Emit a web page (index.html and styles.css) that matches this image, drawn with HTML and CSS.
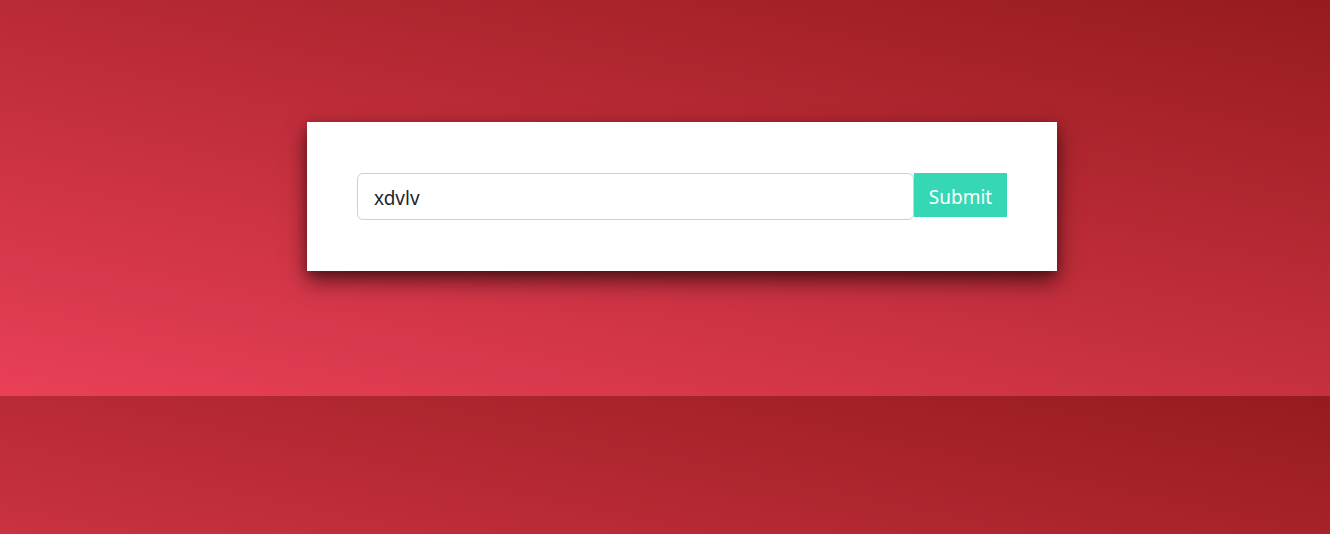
FILE: index.html
```html
<!DOCTYPE html>
<html lang="en">
<head>
<meta charset="utf-8">
<title>Form</title>
<link rel="stylesheet" href="styles.css">
</head>
<body>
  <main class="page">
    <form class="card" onsubmit="return false;">
      <input class="field" type="text" value="xdvlv">
      <button class="submit" type="submit">Submit</button>
    </form>
  </main>
</body>
</html>
```

FILE: styles.css
```css
html {
  background: linear-gradient(12deg, #e94057 0%, #961b1e 100%) 0 0 / 100% 396px repeat;
}
body {
  margin: 0;
  font-family: "Noto Sans", "Open Sans", sans-serif;
}
.page {
  display: flex;
  align-items: flex-start;
  box-sizing: border-box;
  min-height: 396px;
  padding: 122px 0 0 307px;
}
.card {
  width: 750px;
  box-sizing: border-box;
  padding: 51px 50px 51px 50px;
  background: #fff;
  box-shadow: 0 10px 20px rgba(20, 0, 0, 0.6), 0 3px 8px rgba(20, 0, 0, 0.25);
  display: flex;
  align-items: flex-start;
  margin: 0;
}
.field {
  flex: 0 0 557px;
  height: 47px;
  box-sizing: border-box;
  border: 1px solid #cfcfcf;
  border-radius: 6px;
  padding: 3px 16px 0 16px;
  font-family: inherit;
  font-size: 19px;
  color: #212529;
  background: #fff;
  outline: none;
}
.submit {
  width: 93px;
  height: 44px;
  border: 0;
  border-radius: 0;
  background: #36d7b5;
  color: #fff;
  font-family: inherit;
  font-size: 19px;
  padding: 3px 0 0 0;
  cursor: pointer;
}
```
